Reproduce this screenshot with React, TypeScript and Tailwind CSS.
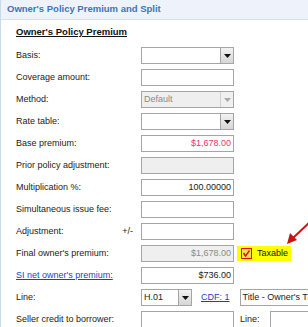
import React from "react";

const Arrow = ({ disabled }: { disabled?: boolean }) => (
    <div className={`w-[13px] h-full shrink-0 flex items-center justify-center border-l ${disabled ? "border-[#d0d0d0] bg-[#f0f0f0]" : "border-[#a5a5a5] bg-gradient-to-b from-[#f2f2f2] to-[#d6d6d6]"}`}>
        <svg width="7" height="4" viewBox="0 0 7 4">
            <path d="M0 0 L7 0 L3.5 4 Z" fill={disabled ? "#a8a8a8" : "#111"} />
        </svg>
    </div>
);

const Box = ({ children, disabled, className = "" }: { children?: React.ReactNode; disabled?: boolean; className?: string }) => (
    <div className={`h-[17px] shrink-0 border border-[#a5a5a5] flex items-center overflow-hidden ${disabled ? "bg-[#efefef]" : "bg-white"} ${className}`}>
        {children}
    </div>
);

const Row = ({ label, link, extra, children }: { label: string; link?: boolean; extra?: string; children: React.ReactNode }) => (
    <div className="h-[22px] flex items-start">
        <div className="w-[125px] shrink-0 h-[17px] flex items-center justify-between pr-[8px]">
            <span className={link ? "text-[#1a3fd0] underline" : "text-[#222]"}>{label}</span>
            {extra && <span className="text-[#222]">{extra}</span>}
        </div>
        {children}
    </div>
);

export default function App() {
    return (
        <div className="relative w-[308px] h-[327px] overflow-hidden bg-white border-l border-[#c9d9ec] font-['Liberation_Sans',Arial,sans-serif] text-[9px]">
            <div className="h-[20px] bg-[#eef3fb] border-b border-[#d5e1ef] flex items-center pl-[6px]">
                <span className="font-bold text-[9.5px] text-[#3f74b5] whitespace-nowrap">Owner's Policy Premium and Split</span>
            </div>
            <div className="pl-[15px] pt-[6px]">
                <div className="h-[12px] leading-[12px] mb-[9px] font-bold text-[9.5px] text-[#111] underline">Owner's Policy Premium</div>

                <Row label="Basis:">
                    <Box className="w-[93px] justify-end">
                        <div className="flex-1" />
                        <Arrow />
                    </Box>
                </Row>
                <Row label="Coverage amount:">
                    <Box className="w-[93px]" />
                </Row>
                <Row label="Method:">
                    <Box disabled className="w-[93px]">
                        <span className="flex-1 pl-[2px] text-[#8a8a8a]">Default</span>
                        <Arrow disabled />
                    </Box>
                </Row>
                <Row label="Rate table:">
                    <Box className="w-[93px]">
                        <div className="flex-1" />
                        <Arrow />
                    </Box>
                </Row>
                <Row label="Base premium:">
                    <Box className="w-[93px] justify-end pr-[2px]">
                        <span className="text-[#e8386a]">$1,678.00</span>
                    </Box>
                </Row>
                <Row label="Prior policy adjustment:">
                    <Box disabled className="w-[93px]" />
                </Row>
                <Row label="Multiplication %:">
                    <Box className="w-[93px] justify-end pr-[2px]">
                        <span className="text-[#222]">100.00000</span>
                    </Box>
                </Row>
                <Row label="Simultaneous issue fee:">
                    <Box className="w-[93px]" />
                </Row>
                <Row label="Adjustment:" extra="+/-">
                    <Box className="w-[93px]" />
                </Row>
                <Row label="Final owner's premium:">
                    <Box disabled className="w-[93px] justify-end pr-[2px]">
                        <span className="text-[#8a8a8a]">$1,678.00</span>
                    </Box>
                    <div className="ml-[3px] mt-[1px] h-[15px] w-[54px] shrink-0 bg-[#ffff00] flex items-center gap-[5px] pl-[4px]">
                        <svg width="11" height="11" viewBox="0 0 11 11">
                            <rect x="0.5" y="0.5" width="10" height="10" fill="#f4e24a" stroke="#e01010" />
                            <path d="M2.5 5 L4.5 8 L8.5 2.5" fill="none" stroke="#e01010" strokeWidth="1.4" />
                        </svg>
                        <span className="text-[#111]">Taxable</span>
                    </div>
                </Row>
                <Row label="SI net owner's premium:" link>
                    <Box className="w-[93px] justify-end pr-[2px]">
                        <span className="text-[#222]">$736.00</span>
                    </Box>
                </Row>
                <Row label="Line:">
                    <Box className="w-[51px]">
                        <span className="flex-1 pl-[2px] text-[#222]">H.01</span>
                        <Arrow />
                    </Box>
                    <span className="ml-[9px] shrink-0 leading-[17px] text-[#1a3fd0] underline whitespace-nowrap">CDF: 1</span>
                    <Box className="ml-[10px] w-[120px]">
                        <span className="pl-[2px] text-[#222] whitespace-nowrap">Title - Owner's Title Insurance</span>
                    </Box>
                </Row>
                <Row label="Seller credit to borrower:">
                    <Box className="w-[93px]" />
                    <span className="ml-[6px] shrink-0 leading-[17px] text-[#222]">Line:</span>
                    <Box className="ml-[10px] w-[60px]" />
                </Row>
            </div>
            <svg className="absolute left-0 top-0 pointer-events-none" width="308" height="327">
                <line x1="309" y1="222" x2="292" y2="238" stroke="#c81414" strokeWidth="2" />
                <path d="M286 244 L289 233 L296 240 Z" fill="#c81414" />
            </svg>
        </div>
    );
}
